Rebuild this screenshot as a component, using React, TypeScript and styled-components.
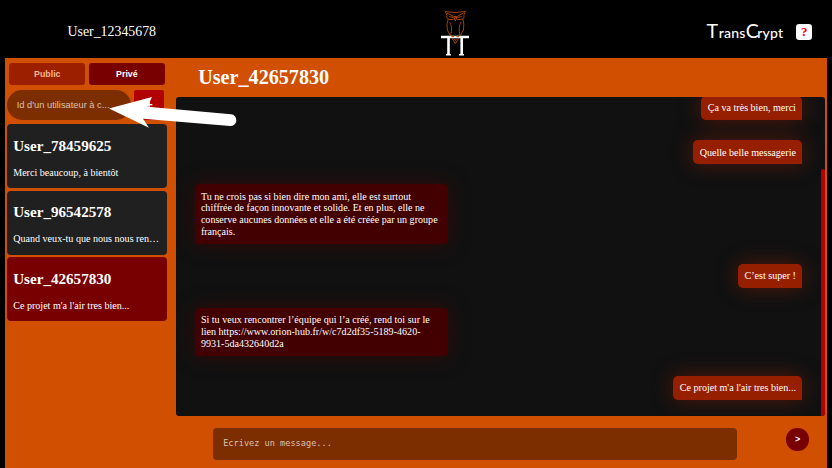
import React from "react";
import styled, { createGlobalStyle, css } from "styled-components";

const GlobalStyle = createGlobalStyle`
  * { box-sizing: border-box; }
  body { margin: 0; background: #000; overflow: hidden; }
  h1, h2, p { margin: 0; }
  button, input { font: inherit; border: 0; outline: 0; }
`;

const Page = styled.div`
  width: 832px;
  height: 468px;
  display: flex;
  flex-direction: column;
  background: #000;
  color: #fff;
  font-family: "Liberation Serif", serif;
  font-size: 10.08px;
  overflow: hidden;
`;

const Header = styled.header`
  height: 58.4px;
  flex: none;
  display: grid;
  grid-template-columns: 441px 28px 1fr;
  align-items: center;
`;

const CurrentUser = styled.div`
  padding: 5px 0 0 67.5px;
  font-size: 13.86px;
  line-height: 16px;
`;

const OwlLogo = styled.svg`
  width: 28px;
  height: 50px;
  align-self: start;
  margin-top: 8px;
`;

const HeaderRight = styled.div`
  display: flex;
  justify-content: flex-end;
  align-items: center;
  padding: 5px 20px 0 0;
`;

const Brand = styled.div`
  display: flex;
  align-items: baseline;
  width: 78px;
  margin-right: 12px;
  font-family: Lato, sans-serif;
  font-size: 14px;
  font-weight: 500;
  letter-spacing: 0.25px;
  line-height: 20px;
  white-space: nowrap;
`;

const BrandCap = styled.span<{ $shift?: number }>`
  font-size: 19.5px;
  font-weight: 400;
  letter-spacing: 0;
  margin-right: ${(p) => p.$shift ?? 0}px;
`;

const HelpButton = styled.button`
  width: 15.6px;
  height: 16px;
  padding: 0;
  border-radius: 3.2px;
  background: #fff;
  color: #f00010;
  font-size: 13px;
  font-weight: 700;
  line-height: 16px;
`;

const Main = styled.main`
  flex: 1;
  min-height: 0;
  margin: 0 4.6px;
  display: grid;
  grid-template-columns: 171px 1fr;
  background: #d14f00;
`;

const Sidebar = styled.aside`
  padding: 4.6px 8.6px 0 2.6px;
`;

const Tabs = styled.div`
  display: flex;
  gap: 3.4px;
  padding: 0 2px;
`;

const Tab = styled.button<{ $active?: boolean }>`
  width: 76.2px;
  height: 22px;
  padding: 0;
  border-radius: 3px;
  background: ${(p) => (p.$active ? "#780000" : "#9c2000")};
  color: ${(p) => (p.$active ? "#fff" : "#f3b592")};
  font-family: "Liberation Sans", sans-serif;
  font-weight: 700;
  font-size: 8.8px;
`;

const SearchRow = styled.div`
  display: flex;
  gap: 3px;
  margin: 5px 0 4.3px;
`;

const SearchInput = styled.input`
  width: 124px;
  height: 30px;
  padding: 0 14px 0 9.6px;
  border-radius: 15px;
  background: #7d2e00;
  font-family: "Liberation Sans", sans-serif;
  font-size: 9.3px;
  &::placeholder { color: #d8c2b4; opacity: 1; }
`;

const AddButton = styled.button`
  width: 29.6px;
  height: 30px;
  padding: 0;
  border-radius: 2px;
  background: #b00000;
  color: #fff;
  font-family: "Liberation Sans", sans-serif;
  font-weight: 700;
  font-size: 13px;
`;

const Conversation = styled.article<{ $active?: boolean }>`
  height: 64px;
  margin-bottom: 2.4px;
  padding: 13.6px 6px 0;
  border-radius: 4px;
  background: ${(p) => (p.$active ? "#780000" : "#202020")};
`;

const ConversationName = styled.h2`
  font-size: 15.12px;
  line-height: 17px;
`;

const ConversationPreview = styled.p`
  margin-top: 12.2px;
  line-height: 12px;
  white-space: nowrap;
`;

const Chat = styled.section`
  min-width: 0;
  padding-right: 2.2px;
`;

const ChatTitle = styled.h1`
  height: 38.6px;
  padding: 6.4px 0 0 22.6px;
  font-size: 20.16px;
  line-height: 24px;
`;

const History = styled.div`
  height: 319px;
  display: flex;
  border-radius: 3px;
  background: #111;
  overflow: hidden;
`;

const Messages = styled.div`
  flex: 1;
  display: flex;
  flex-direction: column;
  padding: 0 19px;
`;

const Bubble = styled.p<{ $mine?: boolean; $gap: number }>`
  flex: none;
  width: fit-content;
  max-width: 253px;
  margin-top: ${(p) => p.$gap}px;
  padding: 6.3px;
  line-height: 11.65px;
  ${(p) =>
    p.$mine
      ? css`
          align-self: flex-end;
          background: #961f00;
          border-radius: 5px 5px 0 5px;
          box-shadow: 0 0 20px rgba(150, 31, 0, 0.5);
        `
      : css`
          background: #420000;
          border-radius: 5px 5px 5px 0;
          box-shadow: 0 0 20px rgba(85, 0, 0, 0.5);
        `}
`;

const ScrollThumb = styled.div`
  width: 4px;
  margin-top: 72px;
  background: #b00000;
  border-radius: 2px 2px 0 0;
`;

const Composer = styled.form`
  display: flex;
  justify-content: space-between;
  padding: 12.2px 16.4px 0 37.6px;
`;

const MessageInput = styled.input`
  width: 524px;
  height: 31.4px;
  padding: 0 10px 2px;
  border-radius: 4px;
  background: #7d2e00;
  font-family: "DejaVu Sans Mono", monospace;
  font-size: 8.6px;
  &::placeholder { color: #d8c2b4; opacity: 1; }
`;

const SendButton = styled.button`
  width: 22.4px;
  height: 22.4px;
  padding: 0;
  border-radius: 50%;
  background: #780000;
  color: #fff;
  font-family: "Liberation Sans", sans-serif;
  font-weight: 700;
  font-size: 9px;
  line-height: 20px;
`;

const Arrow = styled.svg`
  position: absolute;
  left: 106px;
  top: 94px;
  width: 132px;
  height: 36px;
`;

const conversations = [
  { name: "User_78459625", preview: "Merci beaucoup, à bientôt" },
  { name: "User_96542578", preview: "Quand veux-tu que nous nous ren…" },
  { name: "User_42657830", preview: "Ce projet m'a l'air tres bien...", active: true },
];

const messages = [
  { text: "Ça va très bien, merci", mine: true, gap: -1 },
  { text: "Quelle belle messagerie", mine: true, gap: 20 },
  {
    text: "Tu ne crois pas si bien dire mon ami, elle est surtout chiffrée de façon innovante et solide. Et en plus, elle ne conserve aucunes données et elle a été créée par un groupe français.",
    gap: 20,
  },
  { text: "C’est super !", mine: true, gap: 20.2 },
  {
    text: "Si tu veux rencontrer l’équipe qui l’a créé, rend toi sur le lien https://www.orion-hub.fr/w/c7d2df35-5189-4620-9931-5da432640d2a",
    gap: 20,
  },
  { text: "Ce projet m'a l'air tres bien...", mine: true, gap: 20 },
];

export default function App() {
  return (
    <Page>
      <GlobalStyle />
      <Header>
        <CurrentUser>User_12345678</CurrentUser>
        <OwlLogo viewBox="0 0 28 50" fill="none">
          <g stroke="#b44704" strokeWidth="0.9" strokeLinejoin="round">
            <path d="M4.2 3.5 Q14 5.5 24.4 3.5 L22.8 7.5 Q24 11 19.5 11.5 Q16 12.5 14.4 9.5 Q12.5 12.5 9 11.5 Q5 11 6 7.5 Z" />
            <path d="M6 5 L12.5 8.5 H16 L22.5 5 M8 8.5 L12.5 9.5 M20.8 8.5 L16 9.5 M13 9 L14.3 13 L15.7 9" />
            <path d="M7.2 11 Q5.2 16 6.4 22 L9.2 27.5 M21.8 11 Q23.6 16 22.4 22 L19.4 27.5" />
            <path d="M8.6 14 Q12 19 9.6 27.5 M20.2 14 Q16.8 19 19 27.5" />
            <path d="M11 30.5 L14.3 35.5 L17.6 30.5 M12.8 30.5 L14.3 32.5 L15.8 30.5" />
          </g>
          <path d="M0 27.7H28V30.2H22V46H23V47.4H18V46H19.4V30.2H8.8V46H9.8V47.4H5V46H6.2V30.2H0Z" fill="#fff" />
          <path d="M10.4 28.5H13M15.4 28.5H18" stroke="#e05a18" strokeWidth="1.5" />
        </OwlLogo>
        <HeaderRight>
          <Brand>
            <BrandCap $shift={0.8}>T</BrandCap>rans<BrandCap $shift={-1.5}>C</BrandCap>rypt
          </Brand>
          <HelpButton>?</HelpButton>
        </HeaderRight>
      </Header>
      <Main>
        <Sidebar>
          <Tabs>
            <Tab>Public</Tab>
            <Tab $active>Privé</Tab>
          </Tabs>
          <SearchRow>
            <SearchInput placeholder="Id d'un utilisateur à c..." />
            <AddButton>+</AddButton>
          </SearchRow>
          {conversations.map((c) => (
            <Conversation key={c.name} $active={c.active}>
              <ConversationName>{c.name}</ConversationName>
              <ConversationPreview>{c.preview}</ConversationPreview>
            </Conversation>
          ))}
        </Sidebar>
        <Chat>
          <ChatTitle>User_42657830</ChatTitle>
          <History>
            <Messages>
              {messages.map((m) => (
                <Bubble key={m.text} $mine={m.mine} $gap={m.gap}>
                  {m.text}
                </Bubble>
              ))}
            </Messages>
            <ScrollThumb />
          </History>
          <Composer>
            <MessageInput placeholder="Ecrivez un message..." />
            <SendButton type="button">&gt;</SendButton>
          </Composer>
        </Chat>
      </Main>
      <Arrow viewBox="106 94 132 36">
        <path
          d="M109 108.5 L152 97 L147.5 106.8 L231 114.3 A5.8 5.8 0 0 1 230 126 L143 118.7 L149 127.8 Z"
          fill="#fff"
        />
      </Arrow>
    </Page>
  );
}
